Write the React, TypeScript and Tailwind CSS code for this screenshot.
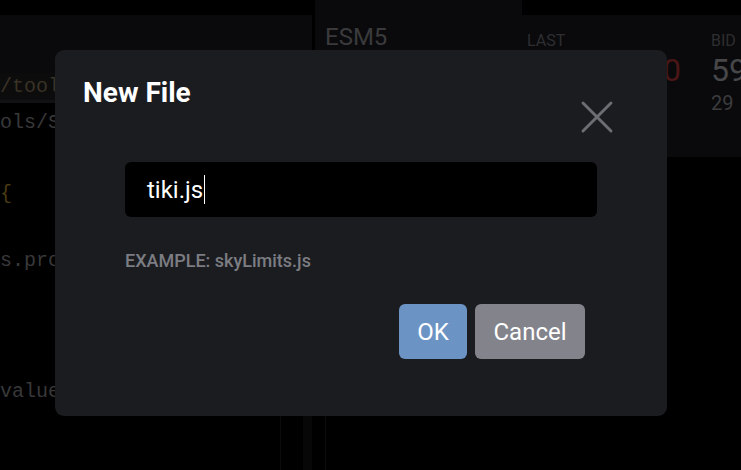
import { X } from 'lucide-react';

const codeLines = [
  { text: '/tools/', color: 'text-[#3a3226]', top: 'mt-[0px]', hl: true },
  { text: 'ols/Sky', color: 'text-[#38383a]', top: 'mt-[6px]' },
  { text: '{', color: 'text-[#4a3b12]', top: 'mt-[44px]' },
  { text: 's.prop', color: 'text-[#38383a]', top: 'mt-[40px]' },
  { text: 'value', color: 'text-[#38383a]', top: 'mt-[104px]' },
];

export default function App() {
  return (
    <div className="relative w-[741px] h-[470px] overflow-hidden bg-black font-['Roboto',sans-serif]">
      {/* page behind the dialog */}
      <div className="flex h-full">
        {/* editor column */}
        <div className="w-[312px] shrink-0 flex flex-col">
          <div className="h-[15px] bg-black" />
          <div className="h-[58px] bg-[#0a0a0c]" />
          <div className="flex flex-col font-['Liberation_Mono',monospace] text-[20px] leading-[27px]">
            {codeLines.map((l) => (
              <div
                key={l.text}
                className={`${l.top} whitespace-pre ${l.color} ${l.hl ? 'bg-[#0c0c0c] border-b-[3px] border-[#111113]' : ''}`}
              >
                {l.text}
              </div>
            ))}
          </div>
          <div className="flex-1 flex pl-[280px] gap-[22px]">
            <div className="w-px bg-[#0b0b0b]" />
            <div className="w-[9px] bg-[#070708]" />
          </div>
        </div>

        <div className="w-[3px] shrink-0" />

        {/* quote panel */}
        <div className="flex-1 min-w-0 flex flex-col">
          <div className="flex h-[15px]">
            <div className="w-[207px] bg-[#0a0a0c]" />
            <div className="flex-1 bg-black" />
          </div>
          <div className="h-[142px] bg-[#0a0a0c] flex">
            <div className="w-[212px] shrink-0 pl-[10px] pt-[8px] text-[24px] text-[#3a3a3c] leading-[28px]">ESM5</div>
            <div className="w-[184px] shrink-0 pt-[17px] flex flex-col">
              <div className="text-[16px] leading-[18px] text-[#2e2e31]">LAST</div>
              <div className="mt-[2px] text-[32px] leading-[36px] text-[#4a1616] text-right pr-[30px]">0</div>
            </div>
            <div className="flex-1 pt-[17px] flex flex-col">
              <div className="text-[16px] leading-[18px] text-[#2e2e31]">BID</div>
              <div className="mt-[2px] text-[32px] leading-[36px] text-[#47474a]">59</div>
              <div className="mt-[4px] text-[20px] leading-[22px] text-[#3c3c3e]">29</div>
            </div>
          </div>
          <div className="flex-1 pl-[10px] pt-[258px]">
            <div className="w-px h-full bg-[#0b0b0b]" />
          </div>
        </div>
      </div>

      {/* dialog */}
      <div className="absolute inset-0 pl-[55px] pt-[50px]">
        <div className="w-[612px] h-[366px] rounded-[9px] bg-[#1b1c20] flex flex-col">
          <div className="flex pl-[28px] pt-[27px] pr-[56px]">
            <h2 className="flex-1 text-[28px] leading-[32px] font-bold text-white">New File</h2>
            <button className="mt-[26px] w-[28px] h-[28px] flex items-center justify-center text-[#6d6e73]">
              <X className="w-[56px] h-[56px] shrink-0" strokeWidth={1.25} />
            </button>
          </div>

          <div className="pl-[70px] pr-[70px] mt-[31px]">
            <div className="h-[55px] rounded-[6px] bg-black flex items-center pl-[22px]">
              <span className="text-[24px] text-white leading-[30px]">tiki.js</span>
              <span className="ml-px w-px h-[29px] bg-white" />
            </div>
            <p className="mt-[33px] text-[18px] leading-[22px] font-medium text-[#7c7d83]">EXAMPLE: skyLimits.js</p>
          </div>

          <div className="flex justify-end gap-[8px] pr-[82px] mt-[32px]">
            <button className="w-[68px] h-[55px] rounded-[6px] bg-[#6b93c4] text-white text-[24px]">OK</button>
            <button className="w-[110px] h-[55px] rounded-[6px] bg-[#82838b] text-white text-[24px]">Cancel</button>
          </div>
        </div>
      </div>
    </div>
  );
}
